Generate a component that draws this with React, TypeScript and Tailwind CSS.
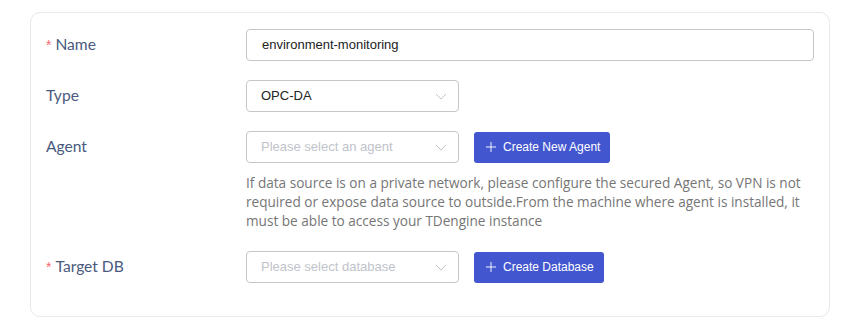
import { Plus } from 'lucide-react';

function Chevron() {
  return (
    <svg width="12" height="7" viewBox="0 0 12 7" fill="none" className="shrink-0">
      <path d="M1 1l5 5 5-5" stroke="#c0c4cc" strokeWidth="1" />
    </svg>
  );
}

function Label({ text, required }: { text: string; required?: boolean }) {
  return (
    <div className="w-[200px] shrink-0 h-8 flex items-center text-[15.6px] text-[#4a5a7e] font-['Lato',sans-serif]">
      {required && (
        <span className="text-[#f56c6c] text-[14px] mr-1 font-['Liberation_Sans',Arial,sans-serif]">*</span>
      )}
      {text}
    </div>
  );
}

function Select({ value, placeholder }: { value?: string; placeholder?: string }) {
  return (
    <div className="w-[213px] h-8 border border-[#c6c6c6] rounded-[4px] flex items-center justify-between pl-[14px] pr-[11px] text-[13px] font-['Liberation_Sans',Arial,sans-serif]">
      {value ? (
        <span className="text-[#222]">{value}</span>
      ) : (
        <span className="text-[#bfc3cb]">{placeholder}</span>
      )}
      <Chevron />
    </div>
  );
}

function AddButton({ text }: { text: string }) {
  return (
    <button className="h-[31px] ml-[15px] pl-[9px] pr-[10px] rounded-[3px] bg-[#4256d0] text-white text-[12px] font-['Liberation_Sans',Arial,sans-serif] flex items-center gap-[4px]">
      <Plus className="w-4 h-4" strokeWidth={1.4} />
      {text}
    </button>
  );
}

export default function App() {
  return (
    <div className="w-[860px] h-[327px] bg-white pt-3 pl-[30px]">
      <div className="w-[800px] h-[305px] border border-[#e9e9e9] rounded-[10px] pt-4 px-[15px]">
        <div className="flex">
          <Label text="Name" required />
          <div className="flex-1 h-8 border border-[#c6c6c6] rounded-[4px] flex items-center px-[15px] text-[13px] text-[#222] font-['Liberation_Sans',Arial,sans-serif]">
            environment-monitoring
          </div>
        </div>

        <div className="flex mt-[19px]">
          <Label text="Type" />
          <Select value="OPC-DA" />
        </div>

        <div className="flex mt-[19px]">
          <Label text="Agent" />
          <div className="flex-1">
            <div className="flex items-center">
              <Select placeholder="Please select an agent" />
              <AddButton text="Create New Agent" />
            </div>
            <p className="mt-[10px] text-[13.6px] leading-[19px] text-[#767676] font-['Open_Sans',sans-serif]">
              If data source is on a private network, please configure the secured Agent, so VPN is not required or expose data source to outside.From the machine where agent is installed, it must be able to access your TDengine instance
            </p>
          </div>
        </div>

        <div className="flex mt-[21px]">
          <Label text="Target DB" required />
          <div className="flex items-center">
            <Select placeholder="Please select database" />
            <AddButton text="Create Database" />
          </div>
        </div>
      </div>
    </div>
  );
}
